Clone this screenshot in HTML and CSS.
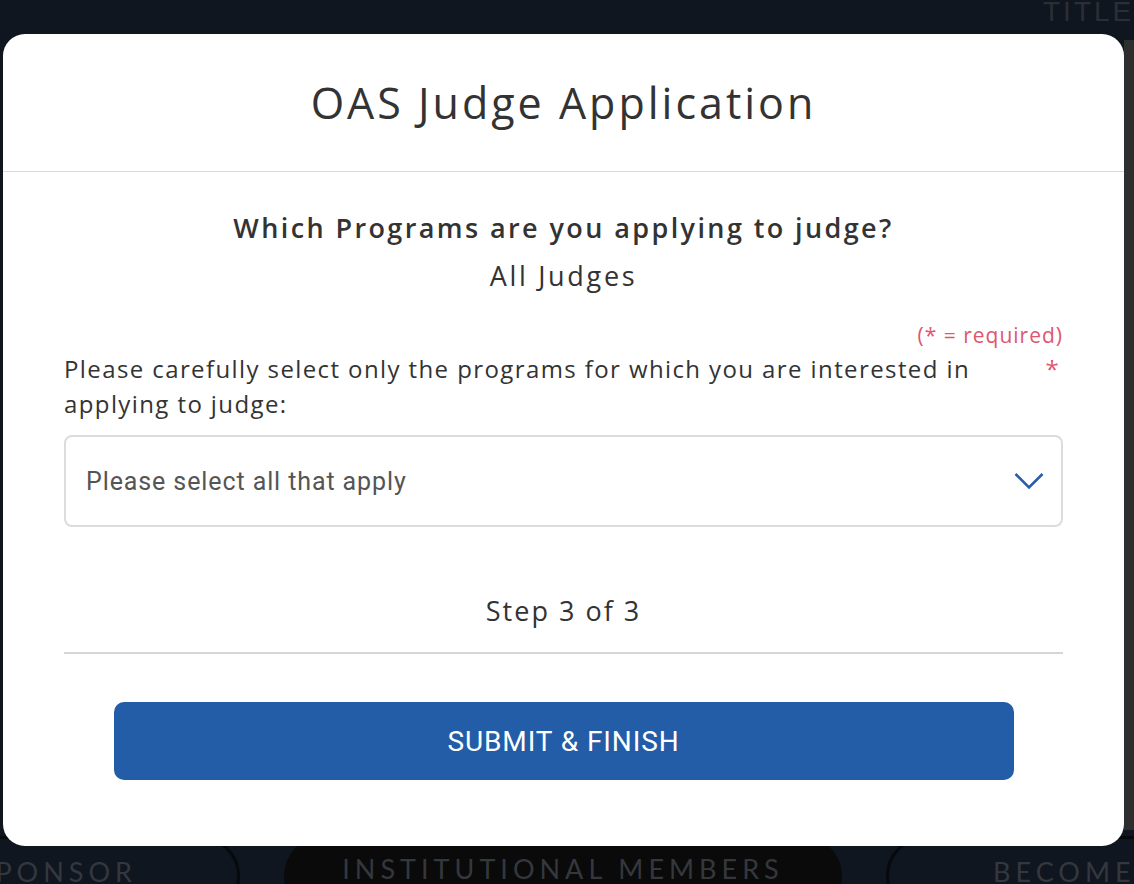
FILE: index.html
```html
<!DOCTYPE html>
<html lang="en">
<head>
    <meta charset="UTF-8">
    <meta name="viewport" content="width=device-width, initial-scale=1.0">
    <title>OAS Judge Application</title>
    <link rel="stylesheet" href="styles.css">
</head>
<body>
    <!-- page behind the modal -->
    <div class="backdrop">
        <span class="bg-title">TITLE</span>
        <div class="side-strip"></div>
        <div class="bg-nav">
            <span class="bg-pill outline left">PONSOR</span>
            <span class="bg-pill dark">INSTITUTIONAL MEMBERS</span>
            <span class="bg-pill outline right">BECOME</span>
        </div>
    </div>

    <div class="modal">
        <div class="modal-header">
            <h1>OAS Judge Application</h1>
        </div>
        <div class="modal-body">
            <h2 class="question">Which Programs are you applying to judge?</h2>
            <p class="subtitle">All Judges</p>

            <div class="required-note">(* = required)</div>
            <div class="field-label">
                <label for="programs">Please carefully select only the programs for which you are interested in applying to judge:</label>
                <span class="star">*</span>
            </div>
            <div class="select-box" id="programs">
                <span>Please select all that apply</span>
                <svg width="30" height="18" viewBox="0 0 30 18">
                    <path d="M1.5 2 L15 15.5 L28.5 2" fill="none" stroke="#2a5ea8" stroke-width="2.6"/>
                </svg>
            </div>

            <p class="step">Step 3 of 3</p>
            <hr class="divider">

            <button class="submit">SUBMIT &amp; FINISH</button>
        </div>
    </div>
</body>
</html>
```

FILE: styles.css
```css
body {
    margin: 0;
    height: 884px;
    overflow: hidden;
    background-color: #0f1620;
    font-family: "Open Sans", Lato, sans-serif;
    position: relative;
}
.backdrop {
    position: absolute;
    inset: 0;
}
.bg-title {
    position: absolute;
    top: -4px;
    left: 1043px;
    font-size: 28px;
    letter-spacing: 3px;
    color: #2b2f35;
    font-family: "Liberation Sans Narrow", "Liberation Sans", sans-serif;
}
.side-strip {
    position: absolute;
    left: 1124px;
    top: 40px;
    width: 10px;
    height: 790px;
    background-color: #2e2e2e;
}
.bg-nav {
    position: absolute;
    top: 836px;
    left: -120px;
    display: flex;
    gap: 44px;
}
.bg-pill {
    height: 80px;
    border-radius: 40px;
    padding: 16px 50px 0;
    box-sizing: border-box;
    font-family: Lato, sans-serif;
    font-size: 27px;
    letter-spacing: 5px;
    color: #34383d;
    white-space: nowrap;
}
.bg-pill.outline {
    border: 3px solid #07090c;
}
.bg-pill.left {
    width: 360px;
    text-align: right;
    padding-right: 100px;
}
.bg-pill.dark {
    width: 558px;
    padding: 16px 0 0;
    background-color: #0a0a0a;
    text-align: center;
}
.bg-pill.right {
    width: 360px;
    padding-left: 104px;
}
.modal {
    position: absolute;
    left: 3px;
    top: 34px;
    width: 1121px;
    height: 812px;
    background-color: #fff;
    border-radius: 22px;
    color: #333;
}
.modal-header {
    height: 137px;
    border-bottom: 1px solid #d9d9d9;
    display: flex;
    align-items: center;
    justify-content: center;
}
.modal-header h1 {
    margin: 0;
    font-size: 43px;
    font-weight: 400;
    color: #333;
    letter-spacing: 3px;
}
.modal-body {
    padding: 38px 61px 0;
    text-align: center;
}
.question {
    margin: 0;
    font-size: 27px;
    font-weight: 600;
    line-height: 36px;
    letter-spacing: 2.4px;
}
.subtitle {
    margin: 12px 0 0;
    font-size: 27px;
    line-height: 36px;
    letter-spacing: 2.7px;
}
.required-note {
    margin-top: 27px;
    text-align: right;
    font-size: 21px;
    letter-spacing: 1px;
    color: #e0566f;
}
.field-label {
    display: flex;
    justify-content: space-between;
    text-align: left;
    font-size: 24px;
    line-height: 35px;
    letter-spacing: 1.4px;
    margin-top: 2px;
}
.field-label label {
    width: 920px;
}
.star {
    color: #e0566f;
    font-size: 24px;
    padding-right: 3px;
}
.select-box {
    margin-top: 14px;
    height: 92px;
    box-sizing: border-box;
    border: 2px solid #dcdcdc;
    border-radius: 8px;
    display: flex;
    align-items: center;
    justify-content: space-between;
    padding: 0 17px 0 20px;
    font-family: Roboto, sans-serif;
    font-size: 25px;
    letter-spacing: 0.9px;
    color: #555;
}
.step {
    margin: 66px 0 0;
    font-size: 27px;
    line-height: 36px;
    letter-spacing: 2px;
}
.divider {
    margin: 23px 0 0;
    border: none;
    border-top: 2px solid #d6d6d6;
}
.submit {
    margin-top: 48px;
    width: 900px;
    height: 78px;
    background-color: #235ca7;
    color: #fff;
    border: none;
    border-radius: 10px;
    font-family: Roboto, sans-serif;
    font-size: 28px;
    letter-spacing: 0.9px;
    cursor: pointer;
}
```
